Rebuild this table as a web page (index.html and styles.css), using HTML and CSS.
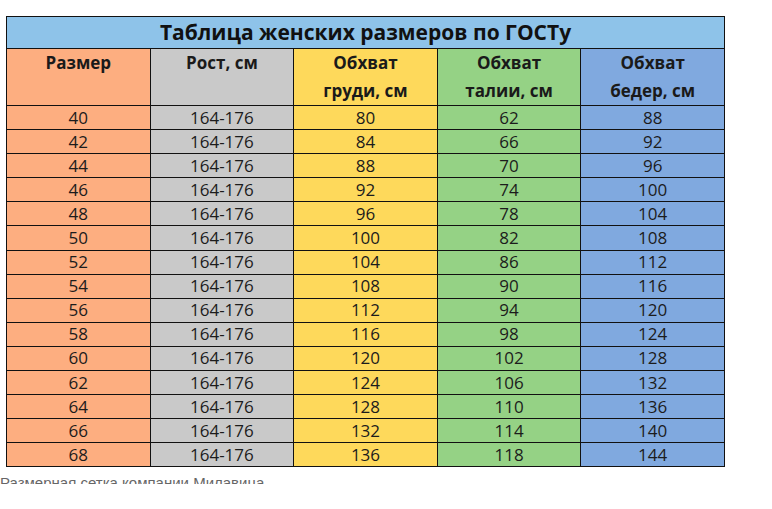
FILE: index.html
```html
<!DOCTYPE html>
<html lang="ru">
<head>
<meta charset="utf-8">
<title>Таблица женских размеров по ГОСТу</title>
<link rel="stylesheet" href="styles.css">
</head>
<body>
<div class="page">
  <table class="sizes">
    <colgroup><col><col><col><col><col></colgroup>
    <thead>
      <tr class="title-row"><th colspan="5">Таблица женских размеров по ГОСТу</th></tr>
      <tr class="head-row">
        <th class="c-size">Размер</th>
        <th class="c-height">Рост, см</th>
        <th class="c-chest">Обхват<br>груди, см</th>
        <th class="c-waist">Обхват<br>талии, см</th>
        <th class="c-hips">Обхват<br>бедер, см</th>
      </tr>
    </thead>
    <tbody>
      <tr><td class="c-size">40</td><td class="c-height">164-176</td><td class="c-chest">80</td><td class="c-waist">62</td><td class="c-hips">88</td></tr>
      <tr><td class="c-size">42</td><td class="c-height">164-176</td><td class="c-chest">84</td><td class="c-waist">66</td><td class="c-hips">92</td></tr>
      <tr><td class="c-size">44</td><td class="c-height">164-176</td><td class="c-chest">88</td><td class="c-waist">70</td><td class="c-hips">96</td></tr>
      <tr><td class="c-size">46</td><td class="c-height">164-176</td><td class="c-chest">92</td><td class="c-waist">74</td><td class="c-hips">100</td></tr>
      <tr><td class="c-size">48</td><td class="c-height">164-176</td><td class="c-chest">96</td><td class="c-waist">78</td><td class="c-hips">104</td></tr>
      <tr><td class="c-size">50</td><td class="c-height">164-176</td><td class="c-chest">100</td><td class="c-waist">82</td><td class="c-hips">108</td></tr>
      <tr><td class="c-size">52</td><td class="c-height">164-176</td><td class="c-chest">104</td><td class="c-waist">86</td><td class="c-hips">112</td></tr>
      <tr><td class="c-size">54</td><td class="c-height">164-176</td><td class="c-chest">108</td><td class="c-waist">90</td><td class="c-hips">116</td></tr>
      <tr><td class="c-size">56</td><td class="c-height">164-176</td><td class="c-chest">112</td><td class="c-waist">94</td><td class="c-hips">120</td></tr>
      <tr><td class="c-size">58</td><td class="c-height">164-176</td><td class="c-chest">116</td><td class="c-waist">98</td><td class="c-hips">124</td></tr>
      <tr><td class="c-size">60</td><td class="c-height">164-176</td><td class="c-chest">120</td><td class="c-waist">102</td><td class="c-hips">128</td></tr>
      <tr><td class="c-size">62</td><td class="c-height">164-176</td><td class="c-chest">124</td><td class="c-waist">106</td><td class="c-hips">132</td></tr>
      <tr><td class="c-size">64</td><td class="c-height">164-176</td><td class="c-chest">128</td><td class="c-waist">110</td><td class="c-hips">136</td></tr>
      <tr><td class="c-size">66</td><td class="c-height">164-176</td><td class="c-chest">132</td><td class="c-waist">114</td><td class="c-hips">140</td></tr>
      <tr><td class="c-size">68</td><td class="c-height">164-176</td><td class="c-chest">136</td><td class="c-waist">118</td><td class="c-hips">144</td></tr>
    </tbody>
  </table>
  <div class="caption-clip"><p class="caption">Размерная сетка компании Милавица</p></div>
</div>
</body>
</html>
```
FILE: styles.css
```css
html, body {
  margin: 0;
  padding: 0;
  background: #ffffff;
}
.page {
  padding-top: 16px;
  font-family: "Open Sans", "Noto Sans", sans-serif;
  color: #1c1c1c;
}
.sizes {
  margin-left: 6px;
  width: 719px;
  table-layout: fixed;
  border-collapse: collapse;
  border: 1.5px solid #111;
}
.sizes th, .sizes td {
  border: 1px solid #111;
  padding: 0;
  text-align: center;
}
.title-row th {
  height: 31px;
  background: #8ec3e9;
  font-size: 21px;
  font-weight: 700;
  color: #111;
  line-height: 31px;
}
.head-row th {
  height: 53px;
  vertical-align: top;
  font-size: 17px;
  font-weight: 700;
  line-height: 28px;
  color: #1a1a1a;
}
.sizes td {
  height: 23.1px;
  font-size: 17px;
  line-height: 22px;
}
.c-size { background: #fdae80; }
.c-height { background: #c9c9c9; }
.c-chest { background: #fed95b; }
.c-waist { background: #95d285; }
.c-hips { background: #80a9df; }
.caption-clip {
  height: 17px;
  overflow: hidden;
}
.caption {
  margin: 0;
  padding-top: 7px;
  font-size: 15px;
  line-height: 18px;
  color: #666;
  font-family: "Liberation Sans", sans-serif;
}
```
